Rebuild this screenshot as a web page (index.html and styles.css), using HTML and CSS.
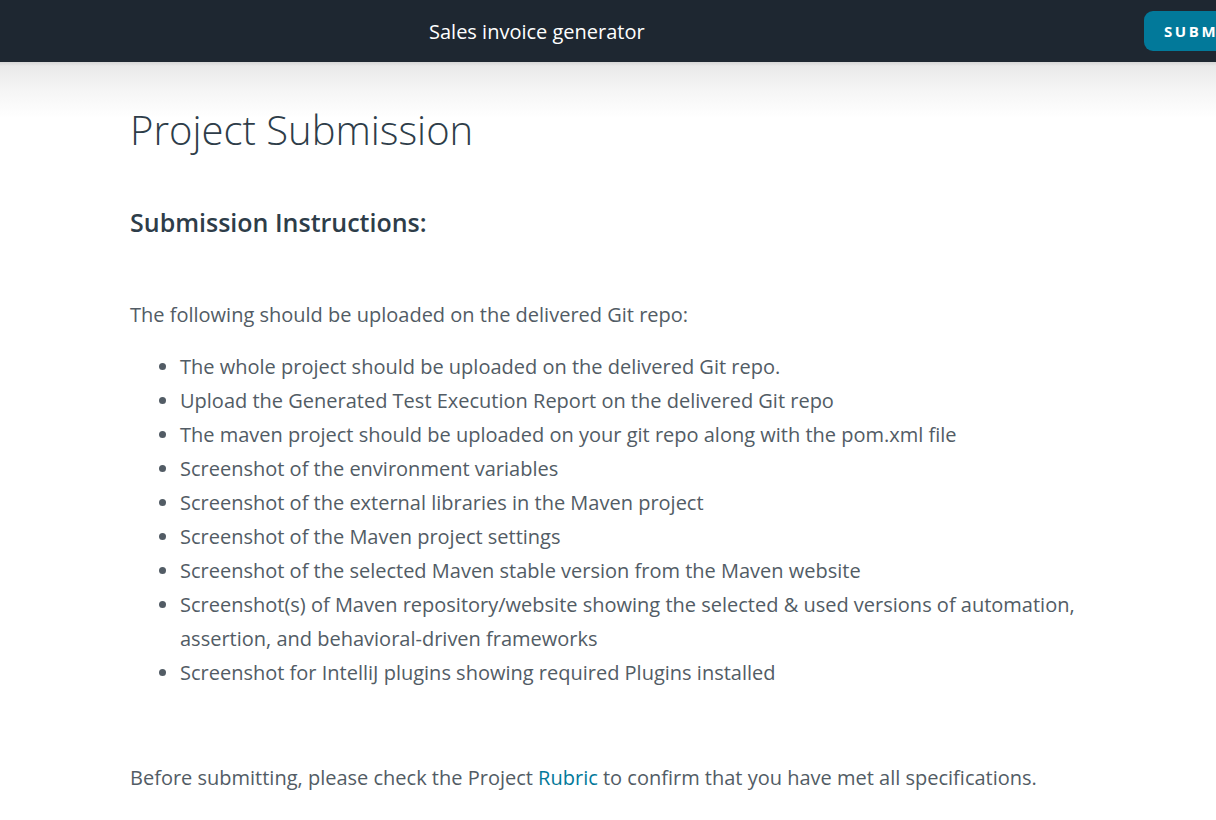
FILE: index.html
```html
<!DOCTYPE html>
<html>
<head>
<meta charset="utf-8">
<link rel="stylesheet" href="styles.css">
</head>
<body>
<header class="topbar">
  <div class="topbar-title">Sales invoice generator</div>
  <button class="submit-btn">SUBMIT PROJECT</button>
</header>
<div class="shade"></div>
<main class="content">
  <h1 class="page-title">Project Submission</h1>
  <h2 class="section-title">Submission Instructions:</h2>
  <p class="intro">The following should be uploaded on the delivered Git repo:</p>
  <ul class="items">
    <li>The whole project should be uploaded on the delivered Git repo.</li>
    <li>Upload the Generated Test Execution Report on the delivered Git repo</li>
    <li>The maven project should be uploaded on your git repo along with the pom.xml file</li>
    <li>Screenshot of the environment variables</li>
    <li>Screenshot of the external libraries in the Maven project</li>
    <li>Screenshot of the Maven project settings</li>
    <li>Screenshot of the selected Maven stable version from the Maven website</li>
    <li>Screenshot(s) of Maven repository/website showing the selected &amp; used versions of automation, assertion, and behavioral-driven frameworks</li>
    <li>Screenshot for IntelliJ plugins showing required Plugins installed</li>
  </ul>
  <p class="outro">Before submitting, please check the Project <a class="link" href="#">Rubric</a> to confirm that you have met all specifications.</p>
</main>
</body>
</html>
```
FILE: styles.css
```css
html, body {
  margin: 0;
  padding: 0;
  background: #ffffff;
  overflow: hidden;
}
body {
  font-family: "Open Sans", "Liberation Sans", sans-serif;
  width: 1216px;
  height: 820px;
}
.topbar {
  height: 62px;
  background: #1e2731;
  display: flex;
  align-items: center;
  position: relative;
}
.topbar-title {
  color: #ffffff;
  font-size: 20px;
  margin-left: 429px;
}
.submit-btn {
  position: absolute;
  left: 1144px;
  top: 11px;
  height: 40px;
  border: none;
  border-radius: 9px;
  background: #02799a;
  color: #ffffff;
  font-family: "Open Sans", sans-serif;
  font-weight: 700;
  font-size: 15px;
  letter-spacing: 2.6px;
  padding: 0 20px;
  white-space: nowrap;
}
.shade {
  height: 56px;
  background: linear-gradient(#d6d6d6 0px, #e9e9e9 4px, #f6f6f6 30px, #ffffff 56px);
  margin-bottom: -56px;
}
.content {
  padding-left: 130px;
  width: 960px;
  color: #525c65;
}
.page-title {
  margin: 0;
  padding-top: 40px;
  font-weight: 300;
  font-size: 40px;
  line-height: 56px;
  color: #2e3d49;
}
.section-title {
  margin: 48px 0 0 0;
  font-weight: 600;
  font-size: 25px;
  line-height: 32px;
  color: #2e3d49;
}
.intro {
  margin: 60px 0 0 0;
  font-size: 20px;
  line-height: 34px;
}
.items {
  margin: 18px 0 0 0;
  padding-left: 50px;
  font-size: 20px;
  line-height: 34px;
}
.outro {
  margin: 71px 0 0 0;
  font-size: 20px;
  line-height: 34px;
}
.link {
  color: #02799a;
  text-decoration: none;
}
```
